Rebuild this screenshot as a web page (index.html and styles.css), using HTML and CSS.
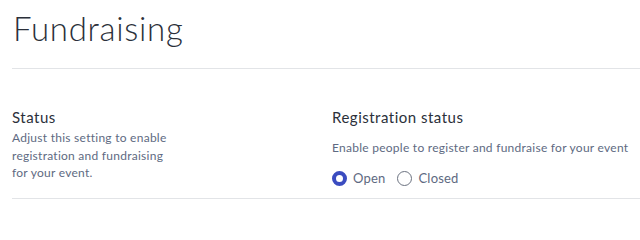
FILE: index.html
```html
<!DOCTYPE html>
<html>
<head>
<meta charset="utf-8">
<link rel="stylesheet" href="styles.css">
</head>
<body>
<div class="page">
  <h1 class="title">Fundraising</h1>
  <div class="section">
    <div class="col-left">
      <h2 class="section-title">Status</h2>
      <p class="help">Adjust this setting to enable<br>registration and fundraising<br>for your event.</p>
    </div>
    <div class="col-right">
      <h3 class="field-title">Registration status</h3>
      <p class="field-help">Enable people to register and fundraise for your event</p>
      <div class="radios">
        <label class="radio"><span class="dot checked"></span>Open</label>
        <label class="radio"><span class="dot"></span>Closed</label>
      </div>
    </div>
  </div>
</div>
</body>
</html>
```

FILE: styles.css
```css
html, body {
  margin: 0;
  padding: 0;
  background: #ffffff;
}
.page {
  padding-left: 12px;
  font-family: Lato, "Noto Sans", sans-serif;
  color: #2b303a;
}
.title {
  margin: 0;
  height: 69px;
  box-sizing: border-box;
  padding-top: 8px;
  padding-left: 1px;
  font-size: 33px;
  line-height: 40px;
  font-weight: 300;
  letter-spacing: 0.7px;
  border-bottom: 1px solid #e2e4e7;
}
.section {
  display: flex;
  border-bottom: 1px solid #e2e4e7;
  height: 130px;
  box-sizing: border-box;
}
.col-left {
  width: 320px;
  padding-top: 38px;
}
.section-title,
.field-title {
  margin: 0;
  font-size: 15px;
  line-height: 20px;
  font-weight: 400;
  letter-spacing: 0.5px;
}
.help {
  margin: 2px 0 0 0;
  font-size: 12px;
  line-height: 17.5px;
  letter-spacing: 0.26px;
  color: #5e6a82;
}
.col-right {
  padding-top: 38px;
}
.field-help {
  margin: 13px 0 0 0;
  font-size: 12px;
  line-height: 16px;
  letter-spacing: 0.26px;
  color: #5e6a82;
}
.radios {
  display: flex;
  gap: 12px;
  margin-top: 14px;
}
.radio {
  display: flex;
  align-items: center;
  gap: 6px;
  font-size: 13px;
  color: #5e6a82;
  line-height: 16px;
  letter-spacing: 0.2px;
}
.dot {
  width: 15px;
  height: 15px;
  border-radius: 50%;
  border: 1px solid #6b7280;
  box-sizing: border-box;
  background: #fff;
}
.dot.checked {
  border: 4.5px solid #3b4cc0;
}
```
